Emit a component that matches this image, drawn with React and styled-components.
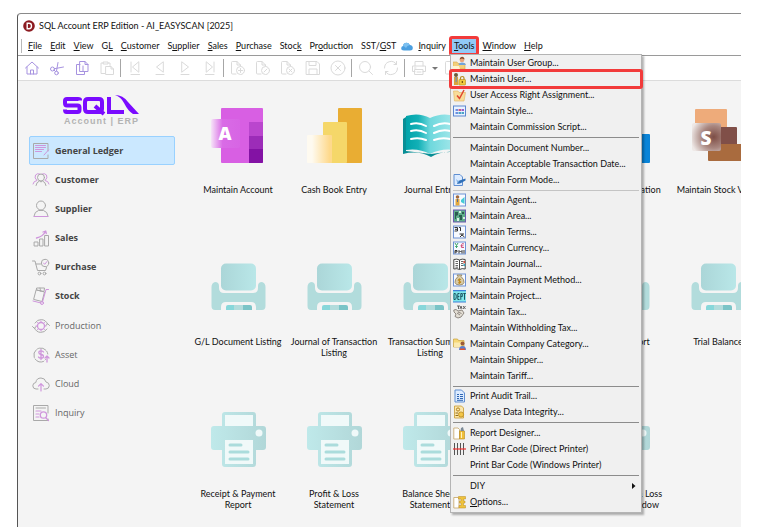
import React from "react";
import styled, { createGlobalStyle, css } from "styled-components";

const GlobalStyle = createGlobalStyle`
  *, *::before, *::after { box-sizing: border-box; }
  body { margin: 0; background: #fff; font-family: Lato, "Open Sans", sans-serif; font-size: 9px; color: #111; }
  button { font: inherit; color: inherit; background: none; border: 0; padding: 0; margin: 0; cursor: default; }
  svg { display: block; flex: none; }
`;

const Page = styled.div`
  min-height: 100vh;
  display: flex;
  padding: 13px 30px 0 17px;
  overflow: hidden;
`;

const Window = styled.div`
  flex: 1;
  min-width: 0;
  display: flex;
  flex-direction: column;
  border-left: 1px solid #555;
  border-top: 1px solid #8a8a8a;
  border-top-left-radius: 4px;
`;

const TitleBar = styled.header`
  display: flex;
  align-items: center;
  gap: 4px;
  height: 23px;
  padding-left: 5px;
`;

const Title = styled.h1`
  margin: 0;
  font-size: 9px;
  font-weight: 400;
  line-height: 12px;
  white-space: nowrap;
`;

const MenuBar = styled.nav`
  display: flex;
  align-items: center;
  height: 19px;
  padding-left: 6px;
  border-bottom: 1px solid #9a9a9a;
  background: linear-gradient(#b8b8b8, #b8b8b8) 3px 2px / 1px 14px no-repeat;
`;

const MenuAnchor = styled.div`
  position: relative;
`;

const MenuButton = styled.button`
  display: flex;
  align-items: center;
  height: 18px;
  padding: 0 ${(p) => (p.$compact ? 1 : 4)}px;
  line-height: 12px;
  white-space: nowrap;
  color: #111;
  ${(p) =>
    p.$open &&
    css`
      background: #91c9f7;
      border: 3px solid #f23b3b;
      border-radius: 3px;
      padding: 0 2px;
      margin: 0 -1px;
      height: 20px;
    `}
`;

const ToolBar = styled.div`
  display: flex;
  align-items: center;
  height: 25px;
  padding-left: 1px;
  border-bottom: 1px solid #dcdcdc;
`;

const ToolButton = styled.button`
  width: 25px;
  height: 24px;
  display: flex;
  align-items: center;
  justify-content: center;
  color: ${(p) => (p.$active ? "#a793e0" : "#dadada")};
`;

const ToolDivider = styled.span`
  width: 1px;
  height: 18px;
  margin: 0 1px;
  background: #a6a6a6;
`;

const Body = styled.div`
  flex: 1;
  display: flex;
  background: #f4f4f4;
`;

const Sidebar = styled.aside`
  flex: none;
  width: 172px;
  padding: 14px 15px 0 11px;
`;

const LogoWrap = styled.div`
  margin-left: 34px;
  height: 41px;
`;

const LogoCaption = styled.div`
  font: 700 9px/10px "Liberation Sans", sans-serif;
  letter-spacing: 1px;
  color: #b3b3b3;
  padding-left: 1px;
  white-space: nowrap;
`;

const NavGroup = styled.div`
  & + & {
    padding-top: 1px;
  }
`;

const NavItem = styled.button`
  width: 100%;
  height: 29px;
  display: flex;
  align-items: center;
  gap: 5px;
  padding-left: 2px;
  border: 1px solid ${(p) => (p.$active ? "#99d1ff" : "transparent")};
  border-radius: 2px;
  background: ${(p) => (p.$active ? "#cbe8ff" : "transparent")};
  color: ${(p) => (p.$strong ? "#444" : "#666")};
  font-family: "Open Sans", sans-serif;
  font-weight: ${(p) => (p.$strong ? 700 : 400)};
  line-height: 13px;
`;

const Main = styled.main`
  flex: 1;
  min-width: 0;
  overflow: hidden;
  padding: 27px 0 16px;
`;

const TileGrid = styled.div`
  display: grid;
  grid-template-columns: repeat(6, 96px);
  row-gap: 54px;
`;

const TileButton = styled.button`
  display: flex;
  flex-direction: column;
  align-items: center;
  gap: 21px;
  height: 98px;
  line-height: 11px;
  white-space: pre;
  text-align: center;
`;

const DropDown = styled.div`
  position: absolute;
  top: 18px;
  left: 0;
  width: 192px;
  padding: 0 2px 2px;
  background: #f0f0f0;
  border: 1px solid #b4b4b4;
  box-shadow: 2px 2px 2px rgba(0, 0, 0, 0.3);
  z-index: 2;
`;

const Item = styled.button`
  position: relative;
  width: 100%;
  height: 16px;
  display: grid;
  grid-template-columns: 13px 1fr auto;
  align-items: center;
  gap: 4px;
  text-align: left;
  line-height: 12px;
  white-space: nowrap;
  color: #111;
  ${(p) =>
    p.$marked &&
    css`
      &::after {
        content: "";
        position: absolute;
        inset: -2px -4px;
        border: 3px solid #f23b3b;
        border-radius: 3px;
      }
    `}
`;

const Divider = styled.div`
  height: ${(p) => (p.$slim ? 4 : 5)}px;
  display: flex;
  align-items: center;
  &::before {
    content: "";
    flex: 1;
    height: 1px;
    background: ${(p) => (p.$light ? "#c4c4c4" : "#8c8c8c")};
  }
`;

/* ---------- toolbar icons ---------- */

const Line = ({ size = 16, children, ...rest }) => (
  <svg width={size} height={size} viewBox="0 0 16 16" fill="none" stroke="currentColor" strokeWidth="1" strokeLinecap="round" strokeLinejoin="round" {...rest}>
    {children}
  </svg>
);

const PageShape = () => <path d="M6 14H2.500Q1.500 14 1.500 13V2.500Q1.500 1.500 2.500 1.500H7L10.500 5V6M7 1.500V5H10.500" />;

const tools = [
  [
    ["Home", <><path d="M1.500 8L8 2L14.500 8M3 7V14H13V7" /><path d="M6.500 14V10H9.500V14" /></>],
    ["Cut", <><circle cx="3.500" cy="9" r="2" /><circle cx="7.500" cy="13" r="1.800" /><path d="M5.500 8.700L14.500 7M7.500 11L9 2.500M5 10L6.500 11.500" /></>],
    ["Copy", <><path d="M6 1.500H11L14 4.500V11.500H6Z" /><path d="M11 1.500V4.500H14M6 4.500H2.500V14.500H10.500V11.500M9 6V11" /></>],
    ["Paste", <><path d="M6 13.500H2V3H4.500M9 3H11V5.500" /><path d="M4.500 2H9V4H4.500ZM7 6.500H12L14.500 9V14.500H7ZM12 6.500V9H14.500" /></>],
  ],
  [
    ["First", <path d="M4 2V12M11.500 2L5.500 7L11.500 12ZM4 14.500H12.500" />],
    ["Previous", <path d="M11 2L4.500 7L11 12ZM4 14.500H12" />],
    ["Next", <path d="M5 2L11.500 7L5 12ZM4 14.500H12" />],
    ["Last", <path d="M12 2V12M4.500 2L10.500 7L4.500 12ZM3.500 14.500H12" />],
  ],
  [
    ["New", <><PageShape /><circle cx="10.500" cy="10.500" r="4" /><path d="M10.500 8.500V12.500M8.500 10.500H12.500" /></>],
    ["Edit record", <><PageShape /><circle cx="10.500" cy="10.500" r="4" /><path d="M9 12L12 9" /></>],
    ["Delete", <><PageShape /><circle cx="10.500" cy="10.500" r="4" /><path d="M9 9L12 12M12 9L9 12" /></>],
    ["Save", <path d="M1.500 1.500H12L14.500 4V14.500H1.500ZM4 1.500V5.500H11V1.500M4 14.500V9H12V14.500" />],
    ["Cancel", <><circle cx="8" cy="8" r="7" /><path d="M5.500 5.500L10.500 10.500M10.500 5.500L5.500 10.500" /></>],
  ],
  [
    ["Find", <><circle cx="7" cy="7" r="5.500" /><path d="M11 11L14.500 14.500" /></>],
    ["Refresh", <path d="M1.500 8A6.500 6.500 0 0 1 13.500 4.500V1.500M13.500 4.500H11M14.500 8A6.500 6.500 0 0 1 2.500 11.500V14.500M2.500 11.500H5" />],
  ],
  [["Print", <path d="M4 6V1.500H12V6M4 11.500H1.500V6H14.500V11.500H12M4 9.500H12V14.500H4ZM6 12H10M3.500 8H5" />]],
];

/* ---------- sidebar icons ---------- */

const G = "#a9a9a9";
const P = "#cf96dc";
const Nav = ({ children }) => (
  <svg width="18" height="18" viewBox="0 0 18 18" fill="none" strokeWidth="1" strokeLinecap="round" strokeLinejoin="round" stroke={G}>
    {children}
  </svg>
);

const navItems = [
  ["General Ledger", true, <><path d="M16 9V1.500H1.500V16.500H16V13" /><path stroke={P} d="M3.500 3.500H13.500M3.500 5.500H13.500M3.500 7.500H11.500M3.500 9.500H9.500M12 13L16.500 8" /></>],
  ["Customer", true, <><path stroke={P} d="M1 13Q1.500 10 5 9.500Q2 7 3.500 4Q5 2 8 3M17 13Q16.500 10 13 9.500Q16 7 14.500 4Q13 2 10 3" /><circle cx="9" cy="6.500" r="3.500" /><path d="M4 14.500Q4.500 11 7.500 10L9 11L10.500 10Q13.500 11 14 14.500" /></>],
  ["Supplier", true, <><circle cx="9" cy="5.500" r="4.500" /><path d="M2 16Q2.500 11.500 6.500 10.500H11.500Q15.500 11.500 16 16" /><path stroke={P} d="M2 16.500H16" /></>],
  ["Sales", true, <><path d="M2.500 13H6V17H2.500ZM8 10H11V17H8ZM13 6.500H16.500V17H13Z" /><path stroke={P} strokeWidth="1.300" d="M4.500 9Q11 7.500 13.500 2.500M11 3L13.700 2L14.300 4.500" /></>],
  ["Purchase", true, <><path d="M.5 3H3L5.500 12.500H13.500L14.500 9.500M4 6H8.500" /><circle cx="7.500" cy="15.500" r="1.400" /><circle cx="12.500" cy="15.500" r="1.400" /><circle cx="13" cy="5" r="3.700" /><path stroke={P} d="M11.500 5L12.700 6.300L15 3.500" /></>],
  ["Stock", true, <><path d="M4.500 3L12.500 5L10 14.500L2 12.500ZM5 1H12.500L12 4.500L4.700 3ZM8 1L8.500 4" /><path stroke={P} d="M16.500 2.500H14L10.500 15M1 14L9 16" /><circle cx="10" cy="16" r="1.500" stroke={P} /></>],
  ["Production", false, <><path d="M3 6A7 7 0 0 1 15.500 7M15 12A7 7 0 0 1 2.500 11M.5 9.500L2.500 11.500L4 9.500M14 8.500L15.500 6.500L17.500 8.500" /><circle cx="9" cy="9" r="3.500" stroke={P} strokeWidth="1.300" /><path stroke={P} d="M9 4V5M9 13V14M4 9H5M13 9H14M5.500 5.500L6.300 6.300M12.500 5.500L11.700 6.300M5.500 12.500L6.300 11.700M12.500 12.500L11.700 11.700" /></>],
  ["Asset", false, <><path d="M11.500 15.500A7 7 0 1 1 15.800 8M13.500 13.500L13 14" strokeDasharray="9 1.500" /><path stroke={P} strokeWidth="1.300" d="M11.500 6Q11 4.800 9 4.800Q6.800 4.800 6.800 6.600Q6.800 8.200 9 8.500Q11.500 8.800 11.500 10.500Q11.500 12.200 9 12.200Q7 12.200 6.500 11M9 3.500V13.500M15 16V10.500M13 12L15 10L17 12" /></>],
  ["Cloud", false, <><path d="M6 14H4Q.8 13.800 .8 10.800Q.8 8 3.800 7.500Q4.500 3 9 3Q13 3 14 7Q17.300 7.500 17.300 10.700Q17 13.800 14 14H12" /><path stroke={P} strokeWidth="1.200" d="M9 16V9M6.500 11.200L9 8.700L11.500 11.200" /></>],
  ["Inquiry", false, <><path d="M16 9V1.500H1.500V16.500H16V15M4 4H13.500" /><path stroke={P} d="M4 7H9M4 10H7M4 13H7M14 14L16.500 16.500" strokeWidth="1.200" /><circle cx="11.500" cy="11" r="3.200" stroke={P} strokeWidth="1.300" /></>],
];

/* ---------- tile artwork ---------- */

const Art = ({ children }) => (
  <svg width="55" height="55" viewBox="0 0 55 55">
    {children}
  </svg>
);

const AccountArt = () => (
  <Art>
    <defs>
      <linearGradient id="acc"><stop offset="0" stopColor="#f6e4f8" /><stop offset=".4" stopColor="#d96be6" /><stop offset="1" stopColor="#d765e4" /></linearGradient>
    </defs>
    <rect x="10" width="42" height="55" rx="1" fill="#d85fe3" />
    <path fill="#ba46ce" d="M38 14H52V28H38Z" />
    <path fill="#9c2cb8" d="M38 28H52V41H38Z" />
    <path fill="#8312a4" d="M38 41H52V54Q52 55 51 55H38Z" />
    <rect y="11" width="29" height="29" rx="2" fill="url(#acc)" />
    <text x="14" y="32" textAnchor="middle" fontFamily="Open Sans, sans-serif" fontWeight="800" fontSize="18" fill="#fff">A</text>
  </Art>
);

const CashArt = () => (
  <Art>
    <defs>
      <linearGradient id="csh"><stop offset=".2" stopColor="#fefaf0" /><stop offset=".9" stopColor="#fed98c" /></linearGradient>
    </defs>
    <rect x="31" width="24" height="55" rx="1" fill="#e9ad33" />
    <rect x="16" y="14" width="24" height="41" rx="1" fill="#f5d769" />
    <rect y="27" width="25" height="28" rx="1" fill="url(#csh)" />
  </Art>
);

const JournalArt = () => (
  <Art>
    <defs>
      <linearGradient id="jr1"><stop offset="0" stopColor="#00a3aa" /><stop offset=".25" stopColor="#12b0b6" /><stop offset=".5" stopColor="#6fd8dd" /><stop offset="1" stopColor="#a5e8eb" /></linearGradient>
    </defs>
    <path fill="#088e95" d="M0 11L3 9V43L28 46L52 43V9L55 11V45Q40 42 28 49Q15 42 0 46Z" />
    <path fill="url(#jr1)" d="M3 8Q16 4 27 10Q39 4 52 8V42Q38 40 27 46Q16 40 3 42Z" />
    <path fill="none" stroke="#fff" strokeWidth="2" strokeLinecap="round" d="M8 16Q16 14 23 18M8 23Q16 21 23 25M8 31Q16 29 23 32M31 18Q39 14 47 16M31 25Q39 21 47 23M31 32Q39 29 47 31" />
  </Art>
);

const BankArt = () => (
  <Art>
    <rect x="4" y="2" width="36" height="24" rx="1" fill="#35b8f1" />
    <rect x="20" y="26" width="35" height="29" rx="1" fill="#0a84d8" />
  </Art>
);

const StockArt = () => (
  <svg width="55" height="55" viewBox="0 0 55 55" overflow="visible">
    <defs>
      <radialGradient id="stk" cx=".75" cy=".5" r=".8"><stop offset="0" stopColor="#7d4d45" /><stop offset=".5" stopColor="#a98780" /><stop offset="1" stopColor="#eee8e6" /></radialGradient>
    </defs>
    <rect x="4" y="1" width="32" height="30" rx="1" fill="#eeab7a" />
    <rect x="28" y="19" width="18" height="18" rx="1" fill="#804f48" />
    <rect x="17" y="36" width="40" height="17" rx="1" fill="#a96b3e" />
    <rect x="1" y="15" width="29" height="28" rx="2" fill="url(#stk)" />
    <text x="15" y="37" textAnchor="middle" fontFamily="Open Sans, sans-serif" fontWeight="800" fontSize="19" fill="#fff">S</text>
  </svg>
);

const ListingArt = () => (
  <Art>
    <defs>
      <linearGradient id="lst"><stop offset="0" stopColor="#abd6d8" /><stop offset="1" stopColor="#b9e7e8" /></linearGradient>
    </defs>
    <path fill="#b2dcdc" d="M4 22Q8 22 8 26V28Q8 33 13 33H42Q47 33 47 28V26Q47 22 51 22Q54.500 23 54.500 27V46Q54.500 50 51 50H45V47Q45 42 40 42H15Q10 42 10 47V50H4Q.5 50 .5 46V27Q.5 23 4 22Z" />
    <rect x="10" y="3.500" width="35" height="27" rx="5" fill="url(#lst)" />
    <path fill="#b2dcdc" d="M23 45H33V50H23Z" />
    <path fill="#88d7da" d="M17 45H23V50H15V47Q15 45 17 45Z" />
    <path fill="#7bc4c7" d="M32 45H39Q41 45 41 47V50H32Z" />
  </Art>
);

const ReportArt = () => (
  <Art>
    <defs>
      <linearGradient id="rpt"><stop offset="0" stopColor="#bfe9ea" /><stop offset="1" stopColor="#b1d7d8" /></linearGradient>
    </defs>
    <path fill="url(#rpt)" d="M14 0H42Q45 0 45 3V14H52Q55 14 55 17V35Q55 38 52 38H45V52Q45 55 42 55H14Q11 55 11 52V38H3Q0 38 0 35V17Q0 14 3 14H11V3Q11 0 14 0Z" />
    <path fill="#f0f9f9" d="M14 3H42V14H14ZM14 28H42V52H14Z" />
    <circle cx="48" cy="21" r="3.500" fill="#f0f9f9" />
    <path fill="none" stroke="#abdcdc" strokeWidth="3" strokeLinecap="round" d="M19 33H30M19 40H37M19 47H37" />
  </Art>
);

const tiles = [
  [AccountArt, "Maintain Account"],
  [CashArt, "Cash Book Entry"],
  [JournalArt, "Journal Entry"],
  null,
  [BankArt, "Bank Reconciliation"],
  [StockArt, "Maintain Stock Value"],
  [ListingArt, "G/L Document Listing"],
  [ListingArt, "Journal of Transaction\nListing"],
  [ListingArt, "Transaction Summary\nListing"],
  null,
  [ListingArt, "Ledger Report"],
  [ListingArt, "Trial Balance"],
  [ReportArt, "Receipt & Payment\nReport"],
  [ReportArt, "Profit & Loss\nStatement"],
  [ReportArt, "Balance Sheet\nStatement"],
  null,
  [ReportArt, "Project Profit & Loss\nby Month Window"],
];

/* ---------- drop-down icons ---------- */

const Mini = ({ children }) => (
  <svg width="13" height="14" viewBox="0 0 13 14">
    {children}
  </svg>
);
const Frame = ({ stroke = "#6f93d6", fill = "#f7faff" }) => <rect x=".5" y="1" width="12" height="12" fill={fill} stroke={stroke} />;

const icons = {
  group: <Mini><path fill="#f3cf7a" stroke="#d9a94a" strokeWidth=".6" d="M0 6H4L5 7.500H12V13H0Z" /><circle cx="9" cy="4" r="2.300" fill="#e9a67c" /><path fill="#8a4b2c" d="M6.500 3.500Q7 .8 9 .8Q11.300 .8 11.500 3.500L9 2.500Z" /><path fill="#6fa3dd" d="M5.500 9Q6 6.500 9 6.500Q12.500 6.500 12.800 9Z" /><path fill="#fff3cf" d="M0 10H6L7 13H0Z" /></Mini>,
  user: <Mini><circle cx="3" cy="3" r="2" fill="#6d5a3a" /><path fill="#d9a43c" d="M1 5H5L5.500 13H1Z" /><path fill="#7a8fa8" d="M2.500 5H3.800V10H2.500Z" /><path fill="none" stroke="#b48a1c" strokeWidth="1.200" d="M7.500 8V6Q7.500 4.500 9.300 4.500Q11 4.500 11 6V8" /><rect x="6" y="7.500" width="6.500" height="5.500" rx=".6" fill="#f0cb3c" stroke="#b48a1c" strokeWidth=".6" /><rect x="8.700" y="9" width="1.300" height="2" fill="#7c5c10" /></Mini>,
  rights: <Mini><path fill="#f8dc9a" stroke="#e1b45c" strokeWidth=".6" d="M.5 3H5L6 4.500H12.500L11 13H1.500Z" /><path fill="none" stroke="#e0452f" strokeWidth="1.500" d="M4 7.500L6.500 10.500L11 2" /></Mini>,
  style: <Mini><rect x=".5" y="2" width="12" height="10" fill="#e9f2ff" stroke="#5d87cf" /><path fill="#6d8fe0" d="M2.500 5H5V7H2.500ZM2.500 8H5V10H2.500Z" /><path fill="#d05a7f" d="M5.500 5H8V7H5.500Z" /><path fill="#4aa3c9" d="M5.500 8H8V10H5.500ZM8.500 8H11V10H8.500Z" /><path fill="#9a5fc9" d="M8.500 5H11V7H8.500Z" /></Mini>,
  form: <Mini><path fill="#dcebff" stroke="#5f8fd2" d="M1 1.500H7L9.500 4V12.500H1Z" /><path fill="#2f6fb8" d="M5 8L12.500 5.500V7.500L7 10.500L4 11Z" /><path fill="#84b6e8" d="M3 6L6 8.500L4.500 10.500Z" /></Mini>,
  agent: <Mini><Frame /><circle cx="4.500" cy="4" r="1.800" fill="#a46a3c" /><path fill="#e2a83e" d="M2.500 6H6.500V12.500H2.500Z" /><path fill="#5a6c8c" d="M4 6H5V9H4Z" /><path fill="#45cbd6" d="M8 7L11.500 4V11L8 9Z" /></Mini>,
  area: <Mini><Frame stroke="#6b5bb0" fill="#5fae8a" /><path fill="#2b5b50" d="M2 3H5V6L3 7V10H2ZM6 6H9V11H7V8H6ZM9 3H11V5H9Z" /><path fill="#d7efe2" d="M6 2H8V4H6ZM4 9H6V12H4ZM10 8H12V10H10Z" /></Mini>,
  terms: <Mini><Frame /><path fill="none" stroke="#333" strokeWidth="1" d="M1.500 2.500H4.500V6H1.500M2 4.300H4M6 2.500H7.500V6M6.500 9H11M9 9V10M7 12L9 10L11.500 12" /></Mini>,
  currency: <Mini><Frame /><path fill="none" stroke="#3fa66a" strokeWidth="1" d="M2 2L3.500 4.500L5 2M3.500 4.500V7M2.200 5.500H4.800" /><path fill="none" stroke="#d2557e" strokeWidth="1" d="M11 3Q9 1.500 8.500 4V6.500H11M7.500 4.800H10.500" /><path fill="none" stroke="#333" d="M2 12.500V9.500H4V11H2M6 12.500V9.500L7.500 11L9 9.500V12.500M11 9V12.500" /></Mini>,
  journal: <Mini><path fill="#fff" stroke="#444" d="M.8 2.500Q4 1.500 6.500 3Q9 1.500 12.200 2.500V12Q9 11 6.500 12.500Q4 11 .8 12ZM6.500 3V12.500" /><path stroke="#666" d="M2.500 4.500H5M2.500 6.500H5M2.500 8.500H5M2.500 10.200H5M8 4.500H10.500M8 6.500H10.500M8 8.500H10.500" /><path fill="#d94a3d" d="M10.500 4H12V6H10.500Z" /><path fill="#37a7c4" d="M10.500 7H12V9H10.500Z" /></Mini>,
  payment: <Mini><Frame /><path fill="#d9cba6" stroke="#8a7c5c" strokeWidth=".8" d="M5 3.500L4 2H9L8 3.500Q11.500 6.500 11 9.500Q10.500 12 6.500 12Q2.500 12 2 9.500Q1.500 6.500 5 3.500Z" /><path fill="none" stroke="#c08a1e" strokeWidth="1" d="M8 6.500Q5 5.500 5 7Q5 8 6.500 8Q8 8.200 8 9.200Q7.500 10.300 5 9.800M6.500 5.500V10.800" /></Mini>,
  project: <Mini><rect y="2" width="13" height="11" fill="#7fe6ea" /><path stroke="#3f7fd8" strokeWidth="1.200" d="M0 1.700H13M0 13H13" /><path fill="none" stroke="#1d5560" strokeWidth="1" d="M1 4.500V10.500H2Q3.300 10.500 3.300 7.500Q3.300 4.500 2 4.500ZM6.500 4.500H4.800V10.500H6.500M4.800 7.500H6.300M7.800 10.800V4.500H9.300V7.500H7.800M10.300 4.500H12.800M11.500 4.500V10.800" /></Mini>,
  tax: <Mini><path fill="none" stroke="#555" strokeWidth=".9" d="M4 1H7M5.500 1V4M7 4L8 1L9 4M10 1L12.500 4M12.500 1L10 4" /><path fill="#e3ded4" stroke="#77706a" strokeWidth=".8" d="M.8 5L3 4.500L5 6L9 5L11 8L8 12L5 13L2 11.500L3 9L1 7Z" /><path stroke="#77706a" strokeWidth=".8" d="M4 8L7 10M5 7L8.500 8.500" /></Mini>,
  company: <Mini><path fill="#f6d876" stroke="#c9a23c" strokeWidth=".7" d="M.5 2H4.500L5.500 3.500H11V10H.5Z" /><path fill="#fbeab0" d="M1 5.500H8V10H1Z" /><circle cx="9.500" cy="6.500" r="2" fill="#9b5a38" /><path fill="#5b7fd0" d="M6 13Q6 9 9.500 9Q13 9 13 13Z" /><path fill="#e0552f" d="M7 11.500H12V13H7Z" /></Mini>,
  audit: <Mini><path fill="#dcebff" stroke="#5f8fd2" d="M2 1H8.500L11.500 4V13H2Z" /><path stroke="#2f66b3" d="M4 5.500H6M7 5.500H10M4 7.500H6M7 7.500H10M4 9.500H6M7 9.500H10M4 11.300H10" /></Mini>,
  integrity: <Mini><path fill="#fbe7ae" stroke="#c99a2e" strokeWidth=".8" d="M1.500 1H8.500L10.500 3V13H1.500Z" /><circle cx="5" cy="4.500" r="1.600" fill="none" stroke="#b07f1a" /><circle cx="8" cy="9.500" r="2.600" fill="#f2c648" stroke="#b07f1a" strokeWidth=".7" /><path fill="#8f6a1c" d="M2.500 7.500H5V8.500H2.500ZM2.500 10H5V11H2.500Z" /></Mini>,
  report: <Mini><path fill="#fff" stroke="#c9ad74" strokeWidth=".9" d="M.8 2H5L6.500 3.500V13H.8Z" /><path fill="#f0bf3a" stroke="#b98b1f" strokeWidth=".6" d="M6.500 5H11.500V13H6.500Z" /><path fill="#7c8a96" d="M8 2L10 1L11 5H7.500Z" /><path fill="#fff2c0" d="M8 6H9V12H8Z" /></Mini>,
  barcode: <Mini><path stroke="#555" strokeWidth="1" d="M1.500 1V13M4.500 1V13M7.500 1V13M10.500 1V13" /><path stroke="#f02f2f" strokeWidth="1.200" d="M0 7H13" /></Mini>,
  options: <Mini><path fill="#fff" stroke="#c9ad74" strokeWidth=".9" d="M.8 2.500H5L6 4V13H.8Z" /><path fill="#efc33d" stroke="#b98b1f" strokeWidth=".5" d="M5.500 1.500H12.500V4H10.500V6H12V8H10.500V10.500H12.500V13H6V10.500H8V8H6.500V6H8V4H5.500Z" /></Mini>,
};

const dropItems = [
  ["Maintain User Group...", "group"],
  ["Maintain User...", "user"],
  ["User Access Right Assignment...", "rights"],
  ["Maintain Style...", "style"],
  ["Maintain Commission Script..."],
  { divider: true },
  ["Maintain Document Number..."],
  ["Maintain Acceptable Transaction Date..."],
  ["Maintain Form Mode...", "form"],
  { divider: true, slim: true, light: true },
  ["Maintain Agent...", "agent"],
  ["Maintain Area...", "area"],
  ["Maintain Terms...", "terms"],
  ["Maintain Currency...", "currency"],
  ["Maintain Journal...", "journal"],
  ["Maintain Payment Method...", "payment"],
  ["Maintain Project...", "project"],
  ["Maintain Tax...", "tax"],
  ["Maintain Withholding Tax..."],
  ["Maintain Company Category...", "company"],
  ["Maintain Shipper..."],
  ["Maintain Tariff..."],
  { divider: true, slim: true },
  ["Print Audit Trail...", "audit"],
  ["Analyse Data Integrity...", "integrity"],
  { divider: true },
  ["Report Designer...", "report"],
  ["Print Bar Code (Direct Printer)", "barcode"],
  ["Print Bar Code (Windows Printer)"],
  { divider: true },
  ["DIY"],
  ["Options...", "options"],
];

const Arrow = () => (
  <svg width="8" height="6" viewBox="0 0 8 6">
    <path d="M1 0L4.500 3L1 6Z" fill="#111" />
  </svg>
);

const ToolsMenu = () => (
  <DropDown role="menu" aria-label="Tools">
    {dropItems.map((it, i) =>
      it.divider ? (
        <Divider key={i} role="separator" $slim={it.slim} $light={it.light} />
      ) : (
        <Item key={i} role="menuitem" $marked={it[0] === "Maintain User..."}>
          {icons[it[1]] || <span />}
          <span>{it[0] === "Options..." ? <><u>O</u>ptions...</> : it[0]}</span>
          {it[0] === "DIY" && <Arrow />}
        </Item>
      )
    )}
  </DropDown>
);

/* [text before, underlined letter, text after] */
const menus = [
  ["", "F", "ile"],
  ["", "E", "dit"],
  ["", "V", "iew"],
  ["G", "L", ""],
  ["", "C", "ustomer"],
  ["S", "u", "pplier"],
  ["", "S", "ales"],
  ["", "P", "urchase"],
  ["Stoc", "k", ""],
  ["Pr", "o", "duction"],
  ["SST/", "G", "ST"],
  "cloud",
  ["", "I", "nquiry"],
  ["", "T", "ools"],
  ["", "W", "indow"],
  ["", "H", "elp"],
];

const Cloud = () => (
  <svg width="12" height="9" viewBox="0 0 12 9">
    <path fill="#4b9fe0" d="M3 8.500Q.2 8.500 .2 6.300Q.2 4.500 2 4Q2.500 .8 5.500 .8Q8 .8 8.800 3Q11.800 3.300 11.800 6Q11.800 8.500 9 8.500Z" />
    <path fill="#7cc0f0" d="M2 4Q2.500 .8 5.500 .8Q8 .8 8.800 3Q6 3.500 5 6Q4 4.500 2 4Z" />
  </svg>
);

export default function App() {
  return (
    <Page>
      <GlobalStyle />
      <Window>
        <TitleBar>
          <svg width="12" height="12" viewBox="0 0 12 12">
            <circle cx="6" cy="6" r="5.800" fill="#8c1a20" />
            <path d="M4.200 3.300H6Q8.500 3.300 8.500 6Q8.500 8.700 6 8.700H4.200Z" fill="none" stroke="#fff" strokeWidth="1.400" />
          </svg>
          <Title>SQL Account ERP Edition - AI_EASYSCAN [2025]</Title>
        </TitleBar>
        <MenuBar aria-label="Main menu">
          {menus.map((m, i) =>
            m === "cloud" ? (
              <MenuButton key={i} $compact aria-label="Cloud services"><Cloud /></MenuButton>
            ) : (
              <MenuAnchor key={i}>
                <MenuButton $open={m[1] === "T"}>
                  <span>{m[0]}<u>{m[1]}</u>{m[2]}</span>
                </MenuButton>
                {m[1] === "T" && <ToolsMenu />}
              </MenuAnchor>
            )
          )}
        </MenuBar>
        <ToolBar role="toolbar" aria-label="Record actions">
          {tools.map((group, g) => (
            <React.Fragment key={g}>
              {g > 0 && <ToolDivider />}
              {group.map(([name, art]) => (
                <ToolButton key={name} aria-label={name} $active={["Home", "Cut", "Copy"].includes(name)}>
                  <Line>{art}</Line>
                </ToolButton>
              ))}
            </React.Fragment>
          ))}
          <svg width="8" height="5" viewBox="0 0 8 5"><path d="M1 1H7L4 4Z" fill="#777" /></svg>
          <ToolButton aria-label="Preview"><Line><PageShape /></Line></ToolButton>
        </ToolBar>
        <Body>
          <Sidebar>
            <LogoWrap>
              <svg width="76" height="21" viewBox="0 0 76 21" fill="none" stroke="#7a0bff" strokeWidth="4">
                <path d="M17 5.500V4.800Q17 4 15 4H4Q2 4 2 6V8Q2 10.500 4 10.500H14.500Q16.500 10.500 16.500 12.500V15Q16.500 17 14.500 17H3.500Q2 17 2 14.500" />
                <path d="M25 4H36Q39 4 39 7V14Q39 17 36 17H25Q22 17 22 14V7Q22 4 25 4ZM32 11L41 19" />
                <path d="M46 2V17H61" />
                <path fill="#7a0bff" stroke="none" d="M52 0Q60 0 65 7L76 19H70Q65 16 61 8Q58 2 52 0Z" />
              </svg>
              <LogoCaption>Account | ERP</LogoCaption>
            </LogoWrap>
            {[true, false].map((group) => (
              <NavGroup key={String(group)}>
                {navItems
                  .filter((n) => n[1] === group)
                  .map(([name, strong, art]) => (
                    <NavItem key={name} $active={name === "General Ledger"} $strong={strong}>
                      <Nav>{art}</Nav>
                      <span>{name}</span>
                    </NavItem>
                  ))}
              </NavGroup>
            ))}
          </Sidebar>
          <Main>
            <TileGrid>
              {tiles.map((t, i) => {
                if (!t) return <span key={i} />;
                const [Picture, label] = t;
                return (
                  <TileButton key={i}>
                    <Picture />
                    <span>{label}</span>
                  </TileButton>
                );
              })}
            </TileGrid>
          </Main>
        </Body>
      </Window>
    </Page>
  );
}
